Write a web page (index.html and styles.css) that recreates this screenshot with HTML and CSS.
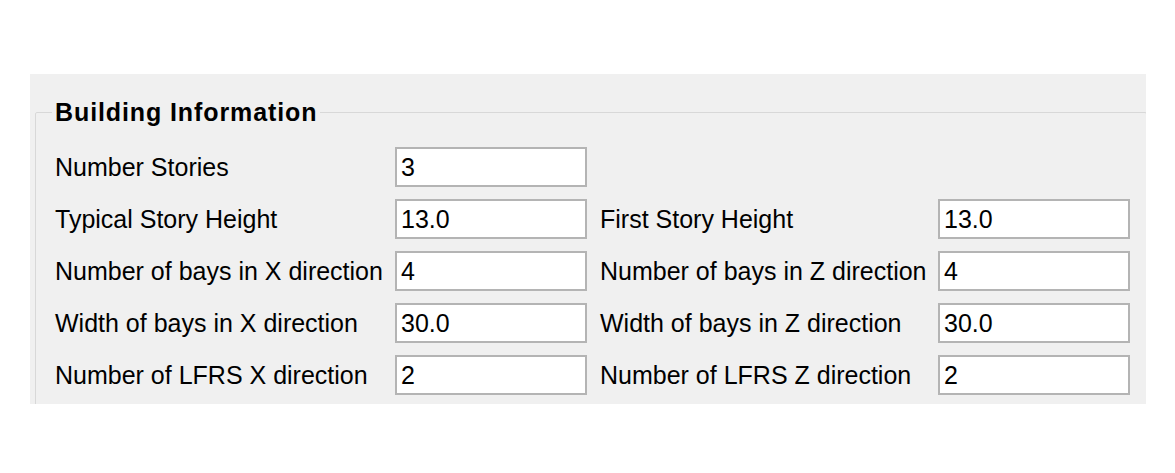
FILE: index.html
```html
<!DOCTYPE html>
<html>
<head>
<meta charset="utf-8">
<link rel="stylesheet" href="styles.css">
</head>
<body>
<div class="panel">
  <fieldset class="group">
    <legend class="group-title">Building Information</legend>
    <div class="form-grid">
      <label class="lbl">Number Stories</label>
      <div class="field">3</div>
      <div class="empty"></div>
      <div class="empty"></div>

      <label class="lbl">Typical Story Height</label>
      <div class="field">13.0</div>
      <label class="lbl lbl-right">First Story Height</label>
      <div class="field">13.0</div>

      <label class="lbl">Number of bays in X direction</label>
      <div class="field">4</div>
      <label class="lbl lbl-right">Number of bays in Z direction</label>
      <div class="field">4</div>

      <label class="lbl">Width of bays in X direction</label>
      <div class="field">30.0</div>
      <label class="lbl lbl-right">Width of bays in Z direction</label>
      <div class="field">30.0</div>

      <label class="lbl">Number of LFRS X direction</label>
      <div class="field">2</div>
      <label class="lbl lbl-right">Number of LFRS Z direction</label>
      <div class="field">2</div>
    </div>
  </fieldset>
</div>
</body>
</html>
```
FILE: styles.css
```css
html, body {
  margin: 0;
  padding: 0;
  background: #ffffff;
}

body {
  font-family: "Liberation Sans", Arial, sans-serif;
  font-size: 25px;
  color: #000000;
}

.panel {
  margin: 74px 0 0 30px;
  width: 1116px;
  height: 330px;
  background: #f0f0f0;
  overflow: hidden;
  padding: 23px 0 0 5px;
  box-sizing: border-box;
}

.group {
  margin: 0;
  padding: 20px 16px 0 16px;
  border: 1px solid #d8d8d8;
  border-radius: 2px;
  min-height: 420px;
  box-sizing: border-box;
}

.group-title {
  padding: 0 3px;
  font-weight: bold;
  font-size: 25px;
  line-height: 30px;
  letter-spacing: 0.9px;
}

.form-grid {
  margin-left: 3px;
  display: grid;
  grid-template-columns: 340px 205px 338px 192px;
  grid-auto-rows: 40px;
  row-gap: 12px;
  align-items: center;
}

.lbl {
  line-height: 40px;
  white-space: nowrap;
}

.field {
  width: 192px;
  height: 40px;
  box-sizing: border-box;
  background: #ffffff;
  border: 2px solid #b4b4b4;
  padding: 0 0 0 4px;
  line-height: 36px;
}
```
